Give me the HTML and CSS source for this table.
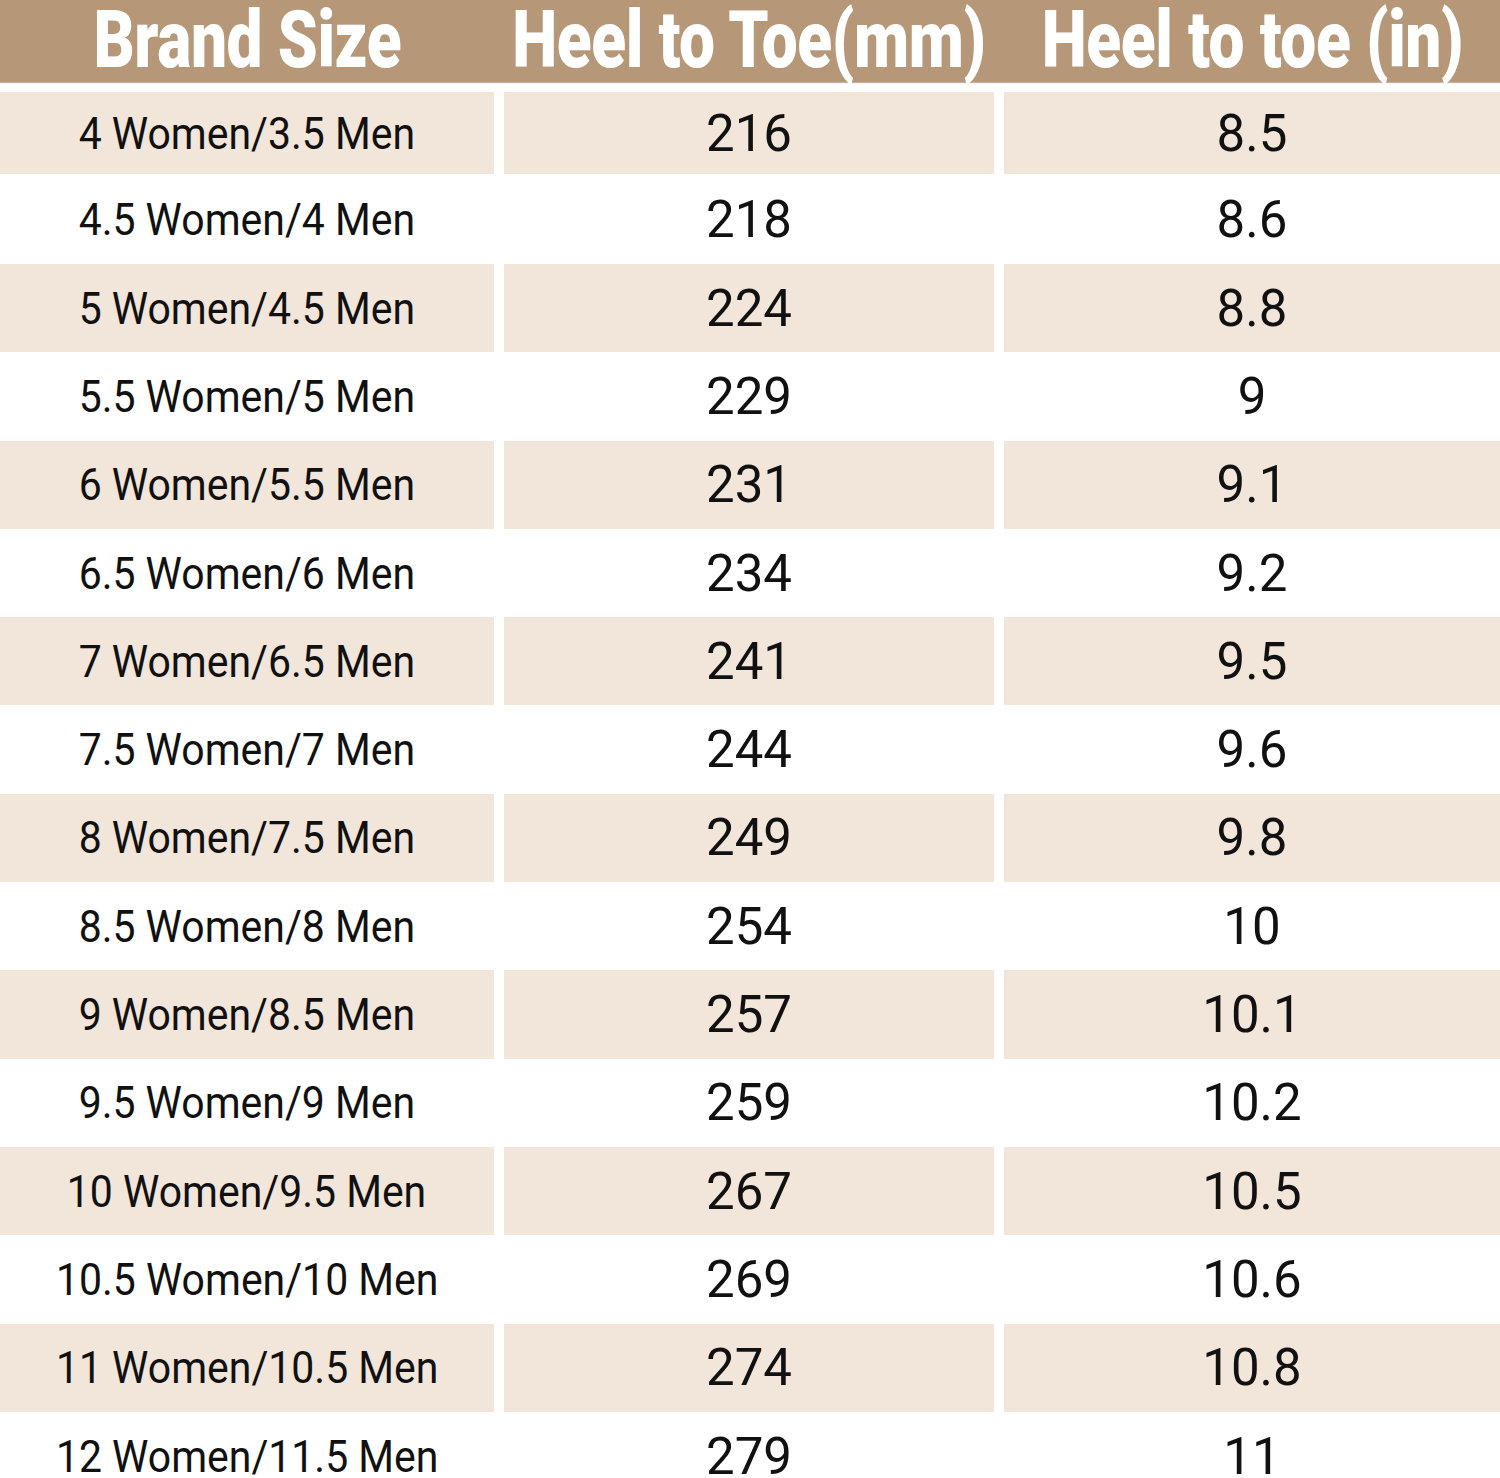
FILE: index.html
```html
<!DOCTYPE html>
<html>
<head>
<meta charset="utf-8">
<link rel="stylesheet" href="styles.css">
</head>
<body>
<div class="chart">
  <div class="head">
    <div class="hcell"><span class="htext">Brand Size</span></div>
    <div class="hcell"><span class="htext">Heel to Toe(mm)</span></div>
    <div class="hcell"><span class="htext">Heel to toe (in)</span></div>
  </div>
  <div class="rows">
    <div class="row shade first"><div class="cell size"><span>4 Women/3.5 Men</span></div><div class="cell num">216</div><div class="cell num">8.5</div></div>
    <div class="row second"><div class="cell size"><span>4.5 Women/4 Men</span></div><div class="cell num">218</div><div class="cell num">8.6</div></div>
    <div class="row shade"><div class="cell size"><span>5 Women/4.5 Men</span></div><div class="cell num">224</div><div class="cell num">8.8</div></div>
    <div class="row"><div class="cell size"><span>5.5 Women/5 Men</span></div><div class="cell num">229</div><div class="cell num">9</div></div>
    <div class="row shade"><div class="cell size"><span>6 Women/5.5 Men</span></div><div class="cell num">231</div><div class="cell num">9.1</div></div>
    <div class="row"><div class="cell size"><span>6.5 Women/6 Men</span></div><div class="cell num">234</div><div class="cell num">9.2</div></div>
    <div class="row shade"><div class="cell size"><span>7 Women/6.5 Men</span></div><div class="cell num">241</div><div class="cell num">9.5</div></div>
    <div class="row"><div class="cell size"><span>7.5 Women/7 Men</span></div><div class="cell num">244</div><div class="cell num">9.6</div></div>
    <div class="row shade"><div class="cell size"><span>8 Women/7.5 Men</span></div><div class="cell num">249</div><div class="cell num">9.8</div></div>
    <div class="row"><div class="cell size"><span>8.5 Women/8 Men</span></div><div class="cell num">254</div><div class="cell num">10</div></div>
    <div class="row shade"><div class="cell size"><span>9 Women/8.5 Men</span></div><div class="cell num">257</div><div class="cell num">10.1</div></div>
    <div class="row"><div class="cell size"><span>9.5 Women/9 Men</span></div><div class="cell num">259</div><div class="cell num">10.2</div></div>
    <div class="row shade"><div class="cell size"><span>10 Women/9.5 Men</span></div><div class="cell num">267</div><div class="cell num">10.5</div></div>
    <div class="row"><div class="cell size"><span>10.5 Women/10 Men</span></div><div class="cell num">269</div><div class="cell num">10.6</div></div>
    <div class="row shade"><div class="cell size"><span>11 Women/10.5 Men</span></div><div class="cell num">274</div><div class="cell num">10.8</div></div>
    <div class="row"><div class="cell size"><span>12 Women/11.5 Men</span></div><div class="cell num">279</div><div class="cell num">11</div></div>
  </div>
</div>
</body>
</html>
```
FILE: styles.css
```css
html, body {
  margin: 0;
  padding: 0;
  background: #ffffff;
}
body {
  width: 1500px;
  height: 1478px;
  overflow: hidden;
}
.chart {
  width: 1500px;
}
.head {
  display: grid;
  grid-template-columns: 494px 510px 496px;
  height: 82px;
  background: #b69778;
  box-shadow: 0 1px 1px rgba(120, 95, 70, 0.45);
}
.hcell {
  display: flex;
  align-items: center;
  justify-content: center;
  padding-bottom: 3px;
}
.htext {
  display: inline-block;
  white-space: nowrap;
  color: #ffffff;
  font-family: Roboto, "Liberation Sans", sans-serif;
  font-weight: 900;
  font-size: 80px;
  line-height: 1;
  letter-spacing: -0.5px;
  transform: scaleX(0.80);
}
.rows {
  margin-top: 10px;
}
.row {
  display: grid;
  grid-template-columns: 494px 490px 496px;
  column-gap: 10px;
  height: 88.3px;
}
.row.first {
  height: 82px;
}
.row.second {
  height: 90px;
}
.row.shade .cell {
  background: #f2e5da;
}
.cell {
  display: flex;
  align-items: center;
  justify-content: center;
  color: #111111;
  font-family: Roboto, "Liberation Sans", sans-serif;
  line-height: 1;
  white-space: nowrap;
}
.size {
  font-size: 45px;
}
.size span {
  display: inline-block;
  transform: scaleX(0.91);
}
.num {
  font-size: 51px;
}
```
